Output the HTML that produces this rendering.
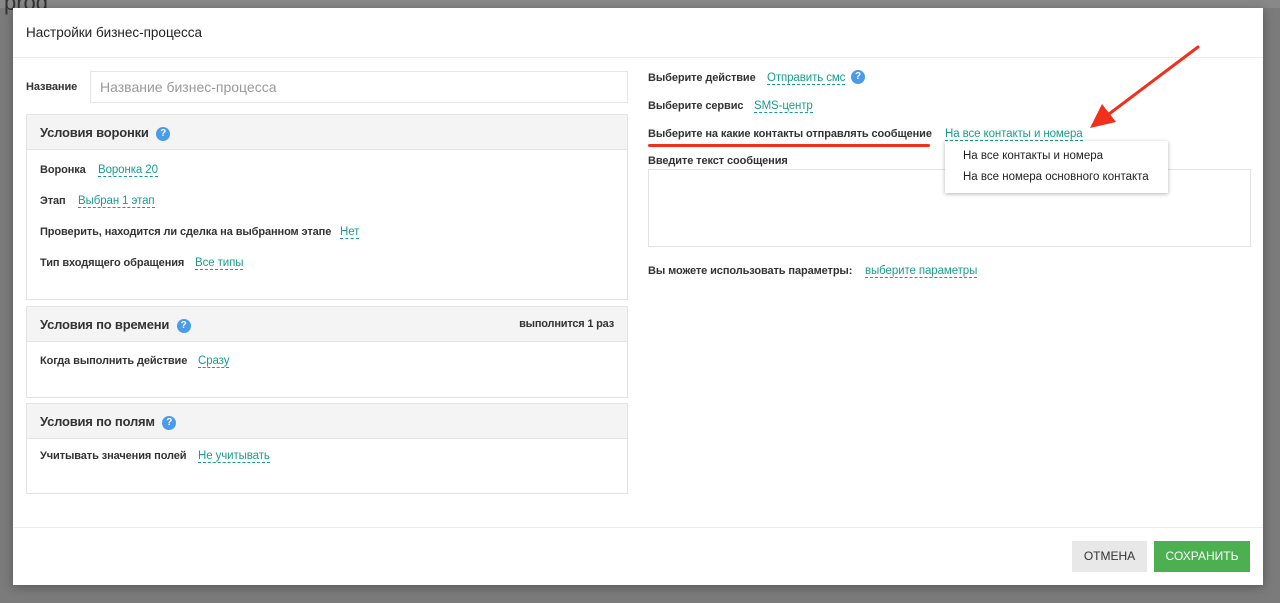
<!DOCTYPE html>
<html><head><meta charset="utf-8"><style>
*{box-sizing:border-box;margin:0;padding:0}
body{width:1280px;height:603px;overflow:hidden;background:#7b7b7b;font-family:"Liberation Sans",sans-serif;font-size:12px;color:#222;position:relative}
.a{position:absolute}
.lnk{color:#1a9c8c;border-bottom:1px dashed #1a9c8c;white-space:nowrap;font-size:11.5px;letter-spacing:-0.1px;margin-top:1px}
.lb{font-weight:bold;color:#333;white-space:nowrap;font-size:11px;letter-spacing:-0.1px;margin-top:1px}
.q{display:inline-block;width:14px;height:14px;border-radius:50%;background:#4a9be8;color:#fff;font-size:10px;text-align:center;line-height:14px;font-weight:bold;vertical-align:1px;margin-left:4px}
.panel{position:absolute;left:26px;width:602px;border:1px solid #e3e3e3;background:#fff}
.ph{background:#f4f4f4;border-bottom:1px solid #e3e3e3;height:35px;padding:0 13px;line-height:35px;font-size:13px;font-weight:bold;color:#333;letter-spacing:-0.2px}
</style></head><body>
<div class="a" style="left:0;top:0;width:1280px;height:8px;background:#888"></div>
<div class="a" style="left:4px;top:-10px;font-size:22px;color:#333">prod</div>
<div class="a" style="left:13px;top:8px;width:1250px;height:577px;background:#fff;box-shadow:0 2px 10px rgba(0,0,0,.3)">
</div>
<div class="a" style="left:26px;top:25px;font-size:13.5px;color:#222">Настройки бизнес-процесса</div>
<div class="a" style="left:13px;top:57px;width:1250px;height:1px;background:#ececec"></div>
<div class="a lb" style="left:26px;top:80px">Название</div>
<div class="a" style="left:90px;top:71px;width:538px;height:32px;border:1px solid #e6e6e6;padding:0 9px;line-height:30px;font-size:14px;color:#999">Название бизнес-процесса</div>

<div class="panel" style="top:114px;height:186px"><div class="ph">Условия воронки <span class="q">?</span></div></div>
<div class="a lb" style="left:40px;top:163px">Воронка</div><div class="a lnk" style="left:98px;top:163px">Воронка 20</div>
<div class="a lb" style="left:40px;top:194px">Этап</div><div class="a lnk" style="left:78px;top:194px">Выбран 1 этап</div>
<div class="a lb" style="left:40px;top:225px">Проверить, находится ли сделка на выбранном этапе</div><div class="a lnk" style="left:340px;top:225px">Нет</div>
<div class="a lb" style="left:40px;top:256px">Тип входящего обращения</div><div class="a lnk" style="left:195px;top:256px">Все типы</div>

<div class="panel" style="top:306px;height:92px"><div class="ph">Условия по времени <span class="q">?</span><span style="float:right;font-size:11px">выполнится 1 раз</span></div></div>
<div class="a lb" style="left:40px;top:354px">Когда выполнить действие</div><div class="a lnk" style="left:198px;top:354px">Сразу</div>

<div class="panel" style="top:403px;height:91px"><div class="ph">Условия по полям <span class="q">?</span></div></div>
<div class="a lb" style="left:40px;top:449px">Учитывать значения полей</div><div class="a lnk" style="left:198px;top:449px">Не учитывать</div>

<div class="a lb" style="left:648px;top:71px">Выберите действие</div><div class="a lnk" style="left:767px;top:71px">Отправить смс</div><span class="a q" style="left:847px;top:70px">?</span>
<div class="a lb" style="left:648px;top:99px">Выберите сервис</div><div class="a lnk" style="left:754px;top:99px">SMS-центр</div>
<div class="a lb" style="left:648px;top:127px">Выберите на какие контакты отправлять сообщение</div><div class="a lnk" style="left:945px;top:127px">На все контакты и номера</div>
<div class="a" style="left:648px;top:144px;width:282px;height:3px;background:#f0301c;border-radius:2px"></div>
<div class="a lb" style="left:648px;top:154px">Введите текст сообщения</div>
<div class="a" style="left:648px;top:169px;width:603px;height:78px;border:1px solid #e3e3e3"></div>
<div class="a lb" style="left:648px;top:264px">Вы можете использовать параметры:</div><div class="a lnk" style="left:865px;top:264px">выберите параметры</div>

<div class="a" style="left:945px;top:141px;width:223px;height:52px;background:#fff;box-shadow:0 1px 4px rgba(0,0,0,.3)"></div>
<div class="a" style="left:963px;top:150px;white-space:nowrap;font-size:11.5px">На все контакты и номера</div>
<div class="a" style="left:963px;top:171px;white-space:nowrap;font-size:11.5px">На все номера основного контакта</div>

<svg class="a" style="left:1080px;top:40px" width="130" height="100"><line x1="118" y1="7" x2="25" y2="77" stroke="#f0301c" stroke-width="3" stroke-linecap="round"/><polygon points="10,88 22,64 36,82" fill="#f0301c"/></svg>

<div class="a" style="left:13px;top:527px;width:1250px;height:1px;background:#ececec"></div>
<div class="a" style="left:1072px;top:541px;width:75px;height:31px;background:#e8e8e8;text-align:center;line-height:31px;font-size:12px;color:#333">ОТМЕНА</div>
<div class="a" style="left:1154px;top:541px;width:96px;height:31px;background:#4caf50;text-align:center;line-height:31px;font-size:12px;color:#fff">СОХРАНИТЬ</div>
</body></html>
